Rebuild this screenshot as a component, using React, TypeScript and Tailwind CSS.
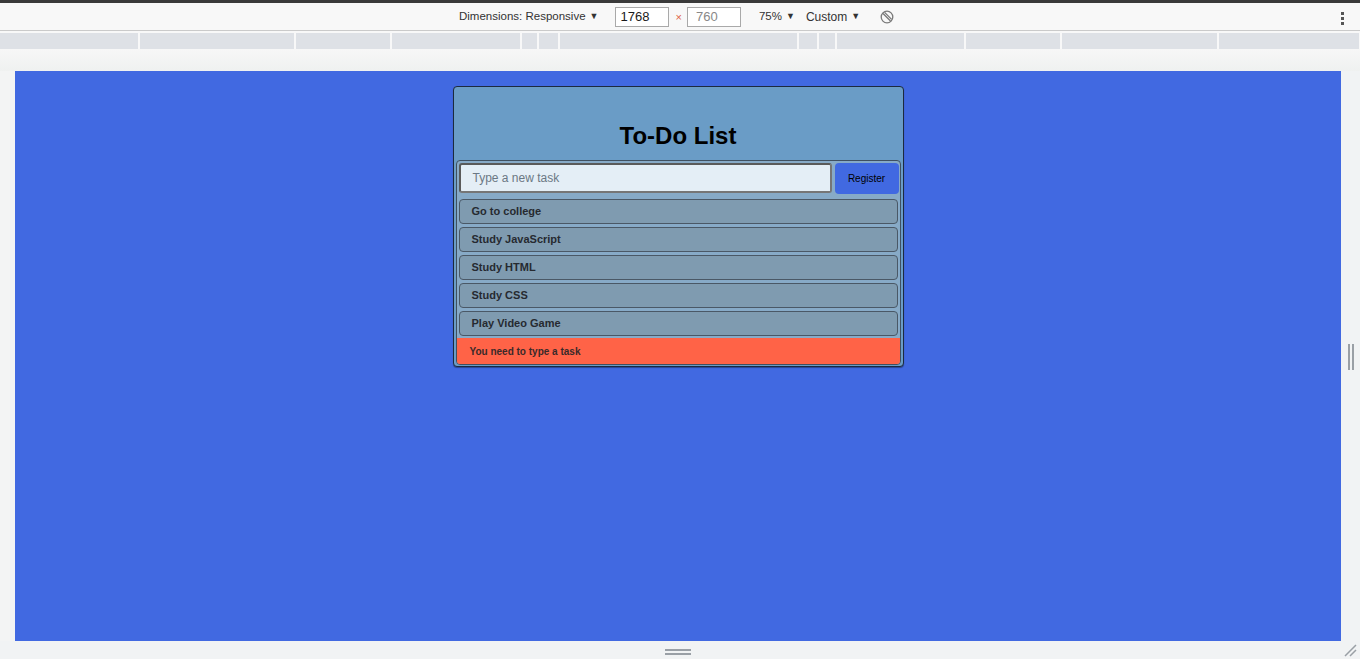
import React from 'react';

const segments = [138, 154, 94, 128, 15, 19, 237, 18, 16, 127, 94, 155, 140];
const tasks = ['Go to college', 'Study JavaScript', 'Study HTML', 'Study CSS', 'Play Video Game'];

const Caret = () => <span className="ml-[4px] text-[9px] text-[#333]">▼</span>;

export default function App() {
    return (
        <div className="w-[1360px] h-[659px] overflow-hidden flex flex-col bg-[#f3f4f4] font-['Liberation_Sans',Arial,sans-serif]">
            {/* devtools chrome */}
            <div className="h-[3px] bg-[#3a3a3a]" />
            <div className="h-[28px] bg-[#f8f8f8] border-b border-[#cacaca] flex items-center pt-[1px] text-[12px] text-[#333] pl-[459px] relative">
                <span className="text-[11.5px]">Dimensions: Responsive</span>
                <Caret />
                <div className="ml-[17px] w-[54px] h-[20px] border border-[#a9a9a9] bg-white flex items-center pl-[4px] text-[13px] text-[#1a1a1a]">1768</div>
                <span className="ml-[6px] mr-[5px] text-[11px] text-[#e0643f]">×</span>
                <div className="w-[54px] h-[20px] border border-[#a9a9a9] bg-white flex items-center pl-[8px] text-[13px] text-[#888]">760</div>
                <span className="ml-[18px] text-[11.5px]">75%</span>
                <Caret />
                <span className="ml-[11px]">Custom</span>
                <Caret />
                <svg className="ml-[20px]" width="14" height="14" viewBox="0 0 14 14" fill="none" stroke="#7a7a7a" strokeWidth="1.3">
                    <circle cx="7" cy="7" r="5.8" />
                    <path d="M3 3.5 L10.5 11 M4.6 2.4 L11.6 9.4" />
                </svg>
                <div className="absolute right-[16px] top-[9px] flex flex-col gap-[2px]">
                    <span className="w-[3px] h-[3px] bg-[#555]" />
                    <span className="w-[3px] h-[3px] bg-[#555]" />
                    <span className="w-[3px] h-[3px] bg-[#555]" />
                </div>
            </div>
            <div className="h-[2px] bg-[#f8f8f8]" />
            <div className="h-[16px] flex gap-[2px] bg-[#f8f8f8]">
                {segments.map((w, i) => (
                    <div key={i} className="h-full bg-[#dee1e6]" style={{ width: w }} />
                ))}
            </div>
            <div className="h-[22px] bg-gradient-to-b from-[#f7f7f7] to-[#eff1f0]" />

            {/* viewport row */}
            <div className="flex h-[570px]">
                <div className="w-[15px]" />
                <div className="w-[1326px] h-full bg-[#4169e1] pt-[15px]">
                    <div className="mx-auto w-[451px] h-[281px] bg-[#6a9cc6] border border-[#1c2a3e] rounded-[4px] px-[2px] flex flex-col shadow-[0_1px_1px_rgba(0,0,0,0.35)]">
                        <div className="h-[73px] flex items-end justify-center pb-[10px]">
                            <h1 className="text-[24px] leading-[28px] font-bold text-black">To-Do List</h1>
                        </div>
                        <div className="flex-1 mb-[1px] bg-[#87aac7] border border-[#3f5061] rounded-[4px] flex flex-col overflow-hidden">
                            <div className="flex gap-[3px] pt-[2px] pl-[2px] pr-[1px]">
                                <div className="w-[373px] h-[30px] bg-[#e4eef6] border-2 border-[#767676] border-t-[#5a5a5a] border-l-[#5a5a5a] rounded-[3px] flex items-center pl-[12px] text-[12px] text-[#6b7884]">
                                    Type a new task
                                </div>
                                <button className="flex-1 h-[31px] bg-[#4169e1] rounded-[4px] text-[10px] text-black">Register</button>
                            </div>
                            <div className="flex flex-col gap-[3px] mt-[5px] px-[2px]">
                                {tasks.map(t => (
                                    <div key={t} className="h-[25px] bg-[#7f9bb0] border border-[#4a5866] rounded-[4px] flex items-center pl-[12px] text-[11px] font-bold text-[#262a30]">
                                        {t}
                                    </div>
                                ))}
                            </div>
                            <div className="mt-[2px] h-[26px] bg-[#ff6347] flex items-center pl-[13px] text-[10px] font-semibold text-[#3a2a2a]">
                                You need to type a task
                            </div>
                        </div>
                    </div>
                </div>
                <div className="flex-1 bg-[#f1f3f4] flex items-center justify-center">
                    <div className="flex gap-[2px] mt-[2px]">
                        <span className="w-[2px] h-[26px] bg-[#9aa0a6]" />
                        <span className="w-[2px] h-[26px] bg-[#9aa0a6]" />
                    </div>
                </div>
            </div>

            {/* bottom strip */}
            <div className="flex-1 bg-[#f1f3f4] relative flex justify-center">
                <div className="ml-[-4px] mt-[8px] flex flex-col gap-[2px]">
                    <span className="w-[26px] h-[2px] bg-[#9aa0a6]" />
                    <span className="w-[26px] h-[2px] bg-[#9aa0a6]" />
                </div>
                <svg className="absolute right-[3px] bottom-[2px]" width="14" height="14" viewBox="0 0 14 14" stroke="#9aa0a6" strokeWidth="1.5">
                    <path d="M2 13 L13 2 M7 13 L13 7" />
                </svg>
            </div>
        </div>
    );
}
